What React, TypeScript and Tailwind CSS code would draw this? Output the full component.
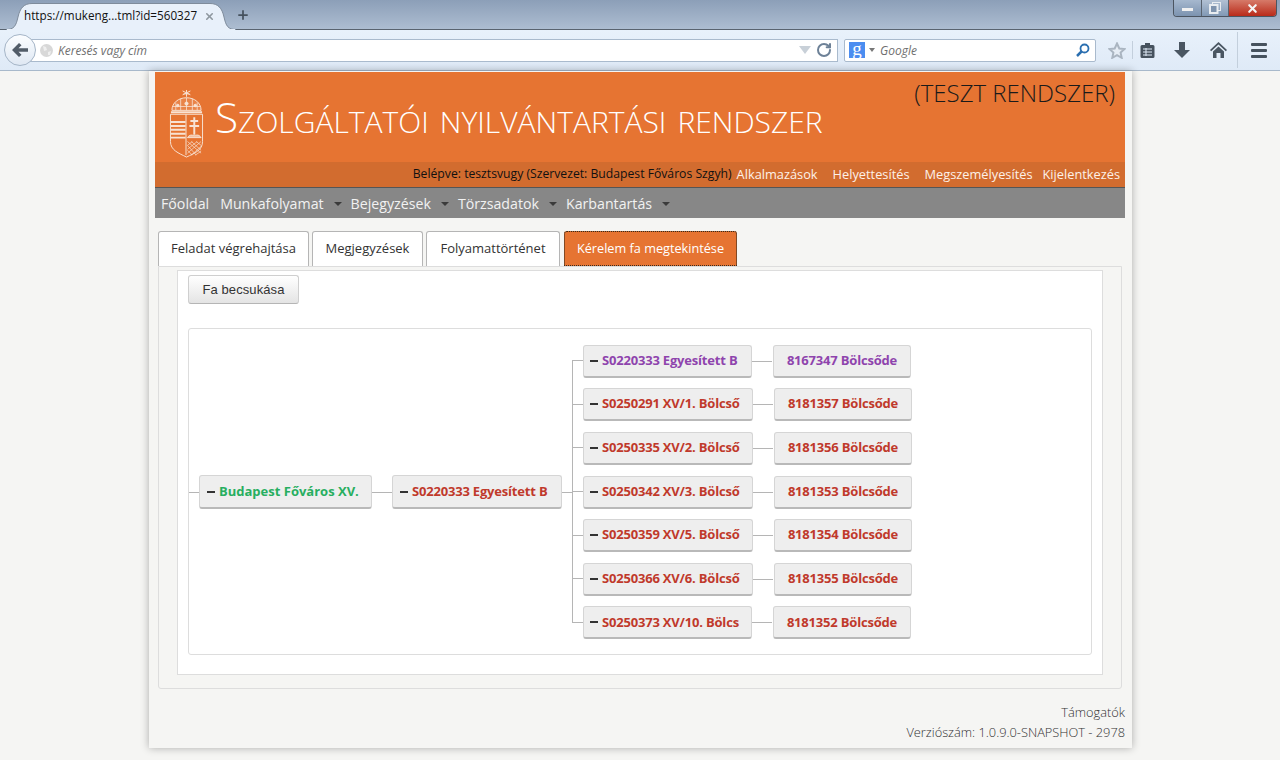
import { Plus, X, RotateCw } from "lucide-react";

const font = "font-['Open_Sans','Liberation_Sans',sans-serif]";
const nodeText = "tracking-[-0.19px]";

const rows = [
  { a: "S0220333 Egyesített B", b: "8167347 Bölcsőde", color: "text-[#8e44ad]", w: "w-[169px]", bw: "w-[138px]" },
  { a: "S0250291 XV/1. Bölcső", b: "8181357 Bölcsőde", color: "text-[#c0392b]", w: "w-[170px]", bw: "w-[138px]" },
  { a: "S0250335 XV/2. Bölcső", b: "8181356 Bölcsőde", color: "text-[#c0392b]", w: "w-[170px]", bw: "w-[138px]" },
  { a: "S0250342 XV/3. Bölcső", b: "8181353 Bölcsőde", color: "text-[#c0392b]", w: "w-[170px]", bw: "w-[138px]" },
  { a: "S0250359 XV/5. Bölcső", b: "8181354 Bölcsőde", color: "text-[#c0392b]", w: "w-[170px]", bw: "w-[138px]" },
  { a: "S0250366 XV/6. Bölcső", b: "8181355 Bölcsőde", color: "text-[#c0392b]", w: "w-[170px]", bw: "w-[138px]" },
  { a: "S0250373 XV/10. Bölcs", b: "8181352 Bölcsőde", color: "text-[#c0392b]", w: "w-[169px]", bw: "w-[138px]" },
];

function Node({ label, color, width, dash = true, center = false, inset = "pl-[7px]", tight = "", height = "h-[33px]" }: { label: string; color: string; width: string; dash?: boolean; center?: boolean; inset?: string; tight?: string; height?: string }) {
  return (
    <div className={`${width} ${height} shrink-0 flex items-center ${center ? "justify-center" : inset} rounded-[3px] border border-[#d5d5d5] border-b-[#b9b9b9] border-b-2 bg-[#eeeeee] text-[13px] font-bold whitespace-nowrap ${tight}`}>
      {dash && <span className="mr-[4px] inline-block h-[2px] w-[8px] bg-[#333333]" />}
      <span className={color}>{label}</span>
    </div>
  );
}

function Line({ width }: { width: string }) {
  return <div className={`${width} h-px shrink-0 bg-[#b5b5b5]`} />;
}

function Crest() {
  return (
    <svg width="35" height="70" viewBox="0 0 36 72" fill="none" stroke="#f8e3d4" strokeWidth="1" className="shrink-0">
      <path d="M15 5h6M18 1v7M14 2l8 4M22 2l-8 4" />
      <path d="M3 22C3 14 10 9 18 9s15 5 15 13z" fill="#ee9a66" fillOpacity=".45" />
      <path d="M12 10v12M18 9v13M24 10v12M7 14v8M29 14v8M4 18h28" strokeWidth=".8" />
      <circle cx="18" cy="15" r="1.6" fill="#f8e3d4" />
      <circle cx="9" cy="17" r="1.3" fill="#f8e3d4" />
      <circle cx="27" cy="17" r="1.3" fill="#f8e3d4" />
      <path d="M2 24h32" strokeWidth="2" />
      <path d="M1.500 26h33v28c0 9-8 12-16.500 16C10 66 1.500 63 1.500 54z" />
      <path d="M2 34h15M2 38h15M2 42h15M2 46h15M2 50h15" strokeWidth="2" />
      <path d="M17.500 26v42" />
      <path d="M26 29v18M22 33h8M21 38h10" strokeWidth="2" />
      <path d="M19 50c2-3 4-3 7-2 3-1 5-1 7 2z" fill="#f8e3d4" fillOpacity=".7" />
      <path d="M19 54l14 12M23 54l10 9M28 54l5 4M19 58l9 10M19 63l5 5M33 54L19 66M29 54L19 62M24 54l-5 4M33 59L23 68M33 64l-6 4" strokeWidth=".7" />
    </svg>
  );
}

function Caret() {
  return <span className="ml-[10px] inline-block border-x-[4px] border-t-[4px] border-x-transparent border-t-[#3a3a3a]" />;
}

function BrowserChrome() {
  return (
    <div className="h-[71px] shrink-0 font-['Open_Sans',sans-serif]">
      <div className="relative flex h-[30px] items-end border-b border-[#59636f] bg-[linear-gradient(#8c9fb8,#adbdd1)]">
        <div className="relative z-10 ml-[6px] mb-[-1px] flex h-[28px] w-[230px] items-center pl-[18px] text-[11.7px] text-[#111111]">
          <svg width="230" height="28" viewBox="0 0 230 28" className="absolute left-0 top-0">
            <path d="M0 27.500C8 27.500 10 24 12 15 14 6 18 1.500 26 1.500H204C212 1.500 216 6 218 15 220 24 222 27.500 230 27.500V28H0z" fill="#e8f0fa" stroke="#7e8b9b" strokeWidth="1" />
            <path d="M1 28H229" stroke="#e8f0fa" strokeWidth="2" />
          </svg>
          <span className="relative w-[170px] whitespace-nowrap">https://mukeng...tml?id=560327</span>
          <X size={11} strokeWidth={3.5} className="relative ml-[10px] text-[#8e979f]" />
        </div>
        <Plus size={14} strokeWidth={3} className="mb-[7px] text-[#46525e]" />
        <div className="absolute right-[3px] top-0 flex h-[17px] overflow-hidden rounded-b-[4px] border border-t-0 border-[#4c5561]">
          <div className="flex w-[28px] items-center justify-center border-r border-[#59636f] bg-[linear-gradient(#a6b8ce,#7c93b0)]">
            <div className="mt-[3px] h-[3px] w-[11px] bg-[#f0f0f0]" />
          </div>
          <div className="flex w-[27px] items-center justify-center border-r border-[#59636f] bg-[linear-gradient(#b2c1d3,#8199b5)]">
            <svg width="12" height="12" viewBox="0 0 12 12" fill="none" stroke="#e8ecf0">
              <rect x="3.500" y=".500" width="8" height="8" strokeWidth="1" />
              <rect x="1" y="3" width="7.500" height="8" strokeWidth="2" fill="#7e93ad" />
            </svg>
          </div>
          <div className="flex w-[47px] items-center justify-center bg-[linear-gradient(#d67a69,#b92a19)]">
            <X size={13} strokeWidth={4} className="text-[#f5f5f5]" />
          </div>
        </div>
      </div>
      <div className="flex h-[41px] items-center border-b border-[#a8b9cb] bg-[linear-gradient(#e8f1fb,#dfeaf7)]">
        <div className="relative z-10 ml-[4px] flex size-[32px] shrink-0 items-center justify-center rounded-full border border-[#a5b5c7] bg-[linear-gradient(#fbfdff,#dfe8f3)]">
          <svg width="16" height="14" viewBox="0 0 16 14" fill="#515c68">
            <path d="M7 0l2.500 2.300L6.500 5.200H16v3.600H6.500l3 2.900L7 14 0 7z" />
          </svg>
        </div>
        <div className="ml-[-6px] flex h-[23px] w-[808px] items-center border border-[#a9bacd] bg-white pl-[9px] pr-[3px] pt-[2px] text-[12px] italic text-[#6f6f6f]">
          <svg width="13" height="13" viewBox="0 0 13 13" className="mr-[5px] -mt-[2px]">
            <circle cx="6.500" cy="6.500" r="6.500" fill="#d8d8d8" />
            <path d="M3 2l3 1 1 3-3 1zM8 8l3-1-1 4-2 0z" fill="#efefef" />
          </svg>
          <span>Keresés vagy cím</span>
          <span className="ml-auto -mt-[2px] inline-block border-x-[6px] border-t-[8px] border-x-transparent border-t-[#c8d0d8]" />
          <RotateCw size={16} strokeWidth={3} className="-mt-[2px] ml-[5px] mr-[2px] text-[#6d8197]" />
        </div>
        <div className="ml-[6px] flex h-[23px] w-[252px] items-center rounded-[2px] border border-[#a9bacd] bg-white pl-[4px] pr-[5px] pt-[2px] text-[12px] italic text-[#6f6f6f]">
          <span className="-mt-[2px] flex h-[16px] w-[16px] items-center justify-center bg-[#4b8df0] pb-[4px] font-['Liberation_Serif',serif] text-[19px] not-italic leading-none text-white">g</span>
          <span className="ml-[4px] mr-[5px] -mt-[2px] inline-block border-x-[3px] border-t-[4px] border-x-transparent border-t-[#777777]" />
          <span>Google</span>
          <svg width="14" height="14" viewBox="0 0 14 14" fill="none" stroke="#2b6fb0" className="ml-auto -mt-[2px]">
            <circle cx="8.500" cy="5.500" r="4" strokeWidth="1.800" />
            <path d="M5.500 8.500L1 13" strokeWidth="2.500" />
          </svg>
        </div>
        <svg width="18" height="17" viewBox="0 0 18 17" className="ml-[12px]">
          <path d="M9 1.500l2.300 5 5.200.600-3.900 3.500 1.100 5.200L9 13.200l-4.700 2.600 1.100-5.200L1.500 7.100l5.200-.600z" fill="#e6edf5" stroke="#aab5c1" strokeWidth="2" />
        </svg>
        <span className="ml-[6px] h-[18px] w-px bg-[#c3cfdc]" />
        <svg width="15" height="15" viewBox="0 0 15 15" className="ml-[7px]">
          <path d="M5 0h5v2h3a1.500 1.500 0 0 1 1.500 1.500v10A1.500 1.500 0 0 1 13 15H2a1.500 1.500 0 0 1-1.500-1.500v-10A1.500 1.500 0 0 1 2 2h3z" fill="#46525e" />
          <path d="M3 6h9M3 9h9M3 12h9M6 5v8" stroke="#dfeaf7" strokeWidth="1" fill="none" />
        </svg>
        <svg width="16" height="16" viewBox="0 0 16 16" fill="#4a5662" className="ml-[19px]">
          <path d="M5 0h6v8h5l-8 8-8-8h5z" />
        </svg>
        <svg width="17" height="16" viewBox="0 0 17 16" fill="#4a5662" className="ml-[20px]">
          <path d="M8.500 0L17 8l-1.200 1.200L8.500 2.500 1.200 9.200 0 8z" />
          <path d="M3 9.500l5.500-5 5.500 5V16h-3.500v-5h-4v5H3z" />
        </svg>
        <span className="ml-[10px] h-[36px] w-px bg-[#c3cfdc]" />
        <div className="ml-[13px] flex w-[16px] flex-col gap-[3px]">
          <div className="h-[3px] rounded-[1px] bg-[#46525e]" />
          <div className="h-[3px] rounded-[1px] bg-[#46525e]" />
          <div className="h-[3px] rounded-[1px] bg-[#46525e]" />
        </div>
      </div>
    </div>
  );
}

function Tab({ label, width, active = false }: { label: string; width: string; active?: boolean }) {
  return (
    <div className={`${width} flex h-[35px] items-center justify-center rounded-t-[3px] border border-b-0 whitespace-nowrap ${active ? "ml-[1px] border-b border-[#c9692e] bg-[#e67432] text-[12.7px] text-white outline-1 -outline-offset-1 outline-dotted outline-[#3a2a1c]" : "border-[#b5b5b5] bg-white text-[13px] text-[#333333]"}`}>
      {label}
    </div>
  );
}

export default function App() {
  return (
    <div className={`flex h-[760px] w-[1280px] flex-col overflow-hidden bg-[#f5f5f3] ${font}`}>
      <BrowserChrome />
      <div className="ml-[149px] h-[677px] w-[983px] bg-[#f5f5f3] pl-[6px] pr-[7px] pt-[1px] shadow-[0_0_8px_rgba(0,0,0,0.3)]">
        <header className="bg-[#e67432]">
          <div className="flex h-[90px] pl-[14px] pr-[10px] pt-[17px]">
            <Crest />
            <div className="ml-[11px] text-[42.4px] font-light leading-[56px] text-white [font-variant-caps:small-caps] whitespace-nowrap">
              Szolgáltatói nyilvántartási rendszer
            </div>
            <div className="ml-auto mt-[-12px] text-[24px] font-light leading-[32px] text-[#1a1a1a] whitespace-nowrap">
              (TESZT RENDSZER)
            </div>
          </div>
          <div className="flex h-[26px] items-center justify-end border-b border-[#555555] bg-[#d26c2f] pr-[5px] whitespace-nowrap">
            <span className="text-[12.2px] text-[#111111]">Belépve: tesztsvugy (Szervezet: Budapest Főváros Szgyh)</span>
            <span className="ml-[5px] text-[12.8px] text-[#fdf1e8]">Alkalmazások</span>
            <span className="ml-[15px] text-[12.8px] text-[#fdf1e8]">Helyettesítés</span>
            <span className="ml-[15px] text-[12.8px] text-[#fdf1e8]">Megszemélyesítés</span>
            <span className="ml-[10px] text-[12.8px] text-[#fdf1e8]">Kijelentkezés</span>
          </div>
        </header>
        <nav className="flex h-[30px] items-center bg-[#878787] pl-[6px] pt-[1px] text-[14.2px] text-[#f2f2f2] whitespace-nowrap">
          <span>Főoldal</span>
          <span className="ml-[11px]">Munkafolyamat</span>
          <Caret />
          <span className="ml-[9px]">Bejegyzések</span>
          <Caret />
          <span className="ml-[9px]">Törzsadatok</span>
          <Caret />
          <span className="ml-[9px]">Karbantartás</span>
          <Caret />
        </nav>

        <div className="mx-[3px] mt-[13px] flex gap-[3px]">
          <Tab label="Feladat végrehajtása" width="w-[151px]" />
          <Tab label="Megjegyzések" width="w-[111px]" />
          <Tab label="Folyamattörténet" width="w-[134px]" />
          <Tab label="Kérelem fa megtekintése" width="w-[173px]" active />
        </div>
        <div className="mx-[3px] h-[423px] rounded-b-[3px] border border-[#dddddd] bg-[#f5f5f3] px-[18px]">
          <div className="mt-[3px] h-[405px] border border-[#dddddd] bg-white px-[10px] pt-[4px]">
            <button className="h-[29px] w-[111px] rounded-[3px] border border-[#cfcfcf] border-b-[#b5b5b5] bg-[linear-gradient(#ffffff,#e4e4e4)] text-[13px] text-[#333333] font-['Liberation_Sans',sans-serif] tracking-[0.1px]">
              Fa becsukása
            </button>
            <div className="mt-[24px] flex h-[327px] items-center rounded-[3px] border border-[#dddddd] bg-white pt-[1px]">
              <Line width="w-[10px]" />
              <Node label="Budapest Főváros XV." color="text-[#27ae60]" width="w-[173px]" height="h-[34px]" />
              <Line width="w-[20px]" />
              <Node label="S0220333 Egyesített B" color="text-[#c0392b]" width="w-[170px]" tight={nodeText} height="h-[34px]" />
              <Line width="w-[10px]" />
              <div className="flex flex-col">
                {rows.map((row, i) => (
                  <div key={row.a} className="flex h-[43.67px] items-center">
                    <div className="flex h-full w-[11px] shrink-0 flex-col">
                      <div className={`h-1/2 border-b border-[#b5b5b5] ${i === 0 ? "" : "border-l"}`} />
                      <div className={`h-1/2 border-[#b5b5b5] ${i === rows.length - 1 ? "" : "border-l"}`} />
                    </div>
                    <Node label={row.a} color={row.color} width={row.w} inset="pl-[6px]" tight={nodeText} />
                    <Line width="w-[20px]" />
                    <div className="w-px" />
                    <Node label={row.b} color={row.color} width={row.bw} dash={false} center tight={nodeText} />
                  </div>
                ))}
              </div>
            </div>
          </div>
        </div>
        <div className="mt-[13px] text-right text-[12.8px] font-light leading-[20px] text-[#333333]">
          <div>Támogatók</div>
          <div>Verziószám: 1.0.9.0-SNAPSHOT - 2978</div>
        </div>
      </div>
    </div>
  );
}
